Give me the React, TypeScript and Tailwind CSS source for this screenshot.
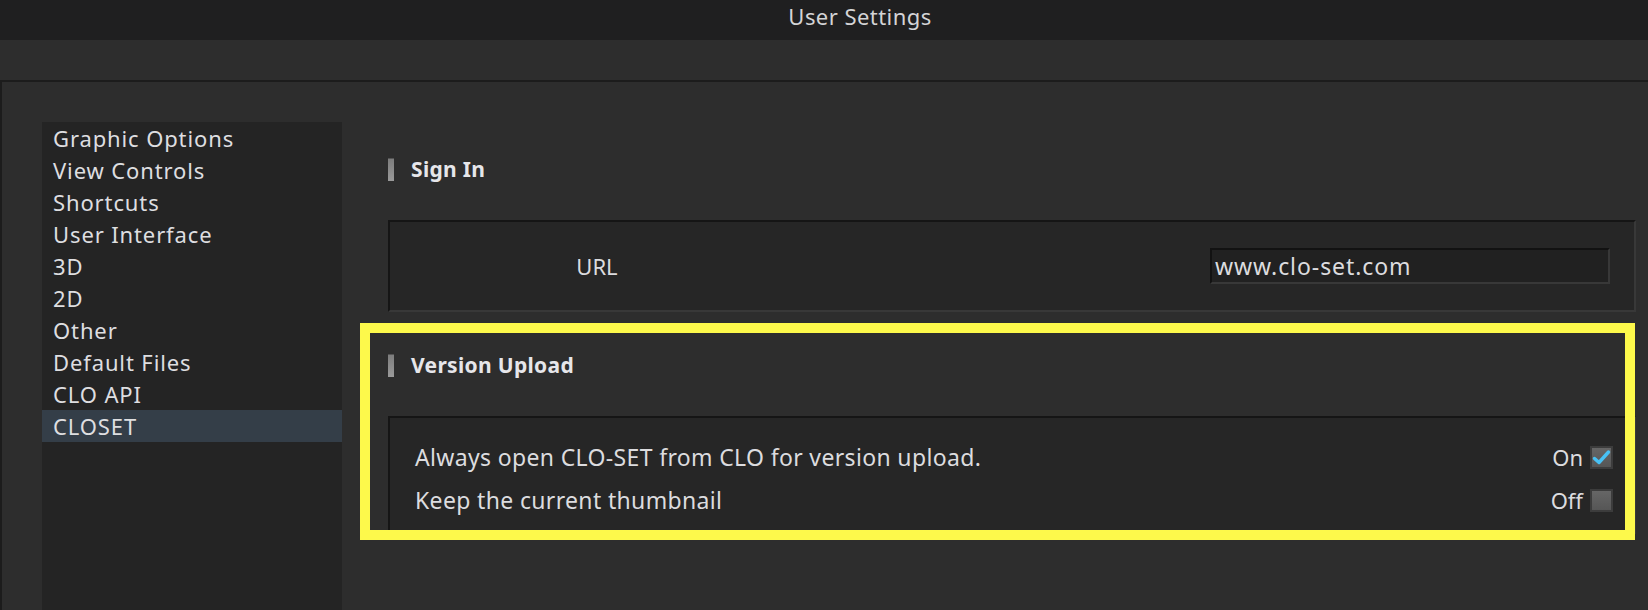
import React from 'react';

const menu = [
  'Graphic Options',
  'View Controls',
  'Shortcuts',
  'User Interface',
  '3D',
  '2D',
  'Other',
  'Default Files',
  'CLO API',
  'CLOSET',
];

const SectionTitle: React.FC<{ label: string }> = ({ label }) => (
  <div className="flex items-center h-[24px]">
    <span className="w-[6px] h-[23px] bg-gradient-to-b from-[#7d7d7d] to-[#9a9a9a] border-t border-[#555]"></span>
    <span className="ml-[17px] text-[21px] font-bold text-[#e6e6ea] leading-none tracking-[0.015em]">{label}</span>
  </div>
);

const Check: React.FC<{ checked: boolean }> = ({ checked }) => (
  <span className="w-[23px] h-[23px] border-2 border-[#3c3c3c] bg-gradient-to-b from-[#666] to-[#565656] flex items-center justify-center">
    {checked && (
      <svg width="19" height="19" viewBox="0 0 19 19">
        <path d="M2.5 10.5 L7 14.5 L16.5 4" fill="none" stroke="#48c1f4" strokeWidth="3.4" strokeLinecap="round" strokeLinejoin="round" />
      </svg>
    )}
  </span>
);

const OptionRow: React.FC<{ text: string; on: boolean }> = ({ text, on }) => (
  <div className="flex items-center h-[43px] pl-[25px] pr-[21px]">
    <span className="text-[23px] text-[#dcdcdf] tracking-[0.015em]">{text}</span>
    <span className="ml-auto flex items-center gap-[7px]">
      <span className="text-[22px] text-[#dcdcdf]">{on ? 'On' : 'Off'}</span>
      <Check checked={on} />
    </span>
  </div>
);

export default function App() {
  return (
    <div className="w-[1648px] h-[610px] overflow-hidden bg-[#2d2d2d] flex flex-col font-['Noto_Sans',sans-serif]">
      {/* window title */}
      <div className="h-[40px] bg-[#1f1f20] flex items-center justify-center pl-[72px] pb-[9px]">
        <span className="text-[22px] text-[#d4d4d6] leading-none tracking-[0.02em]">User Settings</span>
      </div>
      <div className="h-[40px] bg-[#2d2d2d]"></div>
      <div className="h-[2px] bg-[#1c1c1c]"></div>

      <div className="flex flex-1 border-l-2 border-[#1c1c1c]">
        {/* left menu */}
        <div className="ml-[40px] mt-[40px] w-[300px] bg-[#242424] flex flex-col">
          {menu.map((m) => (
            <div
              key={m}
              className={
                'h-[32px] flex items-center pl-[11px] text-[22px] text-[#dedee0] tracking-[0.04em] ' +
                (m === 'CLOSET' ? 'bg-[#343e48]' : '')
              }
            >
              {m}
            </div>
          ))}
        </div>

        {/* settings content */}
        <div className="ml-[46px] mr-[12px] flex-1 flex flex-col">
          <div className="mt-[75px]">
            <SectionTitle label="Sign In" />
          </div>
          <div className="mt-[39px] h-[92px] bg-[#262626] border-2 border-t-[#151515] border-l-[#151515] border-r-[#383838] border-b-[#383838] flex items-center">
            <span className="w-[414px] text-center text-[22px] text-[#dcdcdf]">URL</span>
            <div className="ml-auto mr-[24px] w-[400px] h-[36px] bg-[#212121] border-2 border-t-[#121212] border-l-[#121212] border-r-[#383838] border-b-[#383838] flex items-center pl-[3px]">
              <span className="text-[23px] text-[#dcdcdf] tracking-[0.04em]">www.clo-set.com</span>
            </div>
          </div>

          <div className="relative mt-[11px]">
            <div className="pt-[30px]">
              <SectionTitle label="Version Upload" />
            </div>
            <div className="mt-[39px] bg-[#262626] border-2 border-t-[#151515] border-l-[#151515] border-r-[#383838] border-b-[#383838] pt-[18px] pb-[10px]">
              <OptionRow text="Always open CLO-SET from CLO for version upload." on={true} />
              <OptionRow text="Keep the current thumbnail" on={false} />
            </div>
            {/* highlight annotation */}
            <div className="absolute left-[-28px] right-[1px] top-0 h-[217px] border-[10px] border-[#fdf94b] pointer-events-none"></div>
          </div>
        </div>
      </div>
    </div>
  );
}
